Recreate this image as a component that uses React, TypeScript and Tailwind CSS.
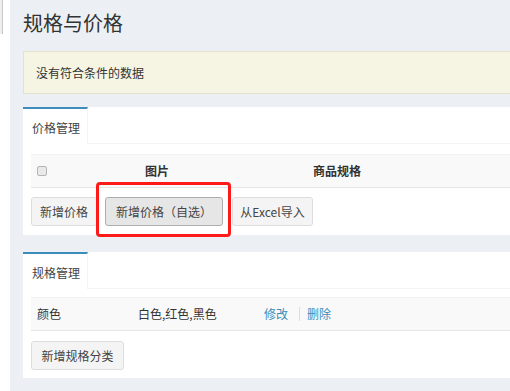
import React from 'react';

const Tab: React.FC<{ label: string }> = ({ label }) => (
  <div className="flex h-[37px]">
    <div className="w-[65px] border-t-2 border-r border-t-[#3c8dbc] border-r-[#f4f4f4] bg-white pl-[9px] pt-[11px] text-[12px] leading-[16px] text-[#444]">
      {label}
    </div>
    <div className="flex-1 border-b border-[#f4f4f4]" />
  </div>
);

const Btn: React.FC<{ label: string; w: string; active?: boolean; className?: string }> = ({ label, w, active, className }) => (
  <button
    className={`${w} ${className ?? ''} h-[29px] rounded-[3px] border text-[12px] leading-[16px] text-[#444] ${
      active ? 'border-[#adadad] bg-[#e6e6e6]' : 'border-[#dddddd] bg-[#f4f4f4]'
    }`}
  >
    {label}
  </button>
);

export default function App() {
  return (
    <div className="relative h-[391px] w-[510px] overflow-hidden font-['Noto_Sans_CJK_SC',sans-serif] text-[#333]">
      <div className="flex h-full w-[760px]">
        {/* narrow sidebar edge */}
        <div className="w-[10px] shrink-0 bg-white">
          <div className="h-[34px] w-[3px] border-r border-[#c8c8c8] bg-[#eeeeee]" />
        </div>

        <main className="flex-1 bg-[#ecf0f5] pl-[13px]">
          <h1 className="pt-[13px] text-[20px] font-normal leading-[20px] text-[#333]">规格与价格</h1>

          <div className="mt-[18px] flex h-[43px] items-center border border-[#e3e1cf] bg-[#f6f5e3] px-[12px] text-[12px] text-[#333]">
            没有符合条件的数据
          </div>

          {/* price panel */}
          <section className="mt-[13px] bg-white">
            <Tab label="价格管理" />
            <div className="px-[8px] pt-[10px] pb-[9px]">
              <div className="flex h-[34px] items-center border-t border-b border-t-[#f2f2f2] border-b-[#e6e6e6] bg-[#f9f9f9] text-[12px] font-bold">
                <div className="w-[52px] pl-[6px]">
                  <span className="block h-[10px] w-[10px] rounded-[2px] border border-[#b5b5b5] bg-[#e9e9e9]" />
                </div>
                <div className="w-[148px] text-center">图片</div>
                <div className="w-[212px] text-center">商品规格</div>
              </div>
              <div className="mt-[9px] flex">
                <Btn label="新增价格" w="w-[66px]" />
                <Btn label="新增价格（自选）" w="w-[118px]" active className="ml-[8px]" />
                <Btn label="从Excel导入" w="w-[81px]" className="ml-[9px]" />
              </div>
            </div>
          </section>

          {/* spec panel */}
          <section className="mt-[17px] bg-white">
            <Tab label="规格管理" />
            <div className="px-[8px] pt-[8px] pb-[8px]">
              <div className="flex h-[34px] items-center border-t border-b border-t-[#f2f2f2] border-b-[#e6e6e6] bg-[#f9f9f9] text-[12px] text-[#333]">
                <div className="w-[107px] pl-[6px]">颜色</div>
                <div className="w-[126px]">白色,红色,黑色</div>
                <div className="flex items-center text-[#3c8dbc]">
                  <span>修改</span>
                  <span className="ml-[11px] h-[14px] w-px bg-[#dddddd]" />
                  <span className="ml-[7px]">删除</span>
                </div>
              </div>
              <div className="mt-[10px] flex">
                <Btn label="新增规格分类" w="w-[93px]" />
              </div>
            </div>
          </section>
        </main>
      </div>

      {/* red highlight annotation */}
      <div className="pointer-events-none absolute left-[96px] top-[182px] h-[55px] w-[135px] rounded-[4px] border-[3px] border-[#ff1a1a]" />
    </div>
  );
}
